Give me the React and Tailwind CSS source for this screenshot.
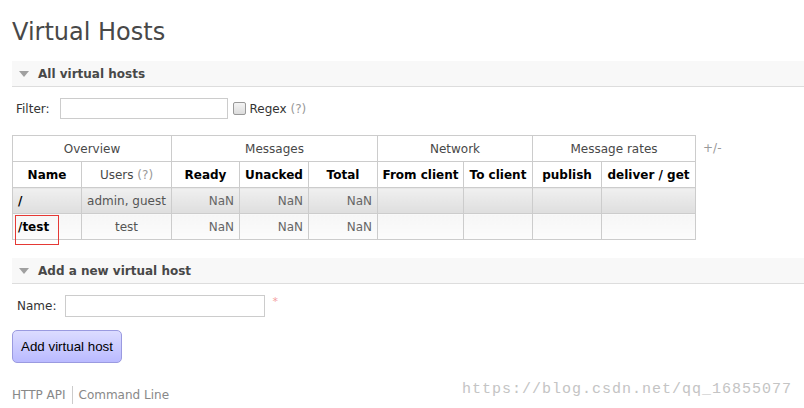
import React from "react";

const widths = [69, 90, 68, 69, 69, 86, 69, 69, 94];

function Bar({ children }) {
  return (
    <div className="flex h-[26px] items-center border-b border-[#dddddd] bg-[#f8f8f8]">
      <span className="ml-[7px] h-0 w-0 border-x-[5px] border-t-[6px] border-x-transparent border-t-[#a0a0a0]" />
      <span className="ml-[9px] text-[12px] font-bold leading-[14px] text-[#484848]">{children}</span>
    </div>
  );
}

export default function App() {
  const th = "border border-[#cccccc] h-[26px] p-0 align-middle leading-[14px]";
  const alt1 = "bg-linear-to-b from-[#f0f0f0] to-[#dedede]";
  const alt2 = "bg-linear-to-b from-[#f6f6f6] to-[#fcfcfc]";
  const rows = [
    { name: "/", users: "admin, guest", bg: alt1 },
    { name: "/test", users: "test", bg: alt2 },
  ];
  return (
    <div className="relative h-[408px] w-[804px] overflow-hidden bg-white font-['DejaVu_Sans',sans-serif] text-[12px] text-[#484848]">
      <div className="pl-[12px]">
        <h1 className="pt-[18px] text-[24px] font-normal leading-[28px] text-[#484848]">Virtual Hosts</h1>

        <div className="mt-[15px]">
          <Bar>All virtual hosts</Bar>
        </div>

        <div className="mt-[11px] flex h-[21px] items-center pl-[4px]">
          <span className="leading-[14px] text-[#333]">Filter:</span>
          <span className="ml-[10px] h-[21px] w-[168px] border border-[#cccccc] bg-white" />
          <span className="ml-[5px] h-[13px] w-[13px] rounded-[2px] border border-[#999] bg-linear-to-b from-[#f4f4f4] to-[#dcdcdc]" />
          <span className="ml-[4px] leading-[14px] text-[#333]">
            Regex <span className="text-[#999]">(?)</span>
          </span>
        </div>

        <div className="mt-[16px] flex items-start">
          <table className="w-[684px] table-fixed border-collapse text-[12px]">
            <colgroup>
              {widths.map((w, i) => (
                <col key={i} style={{ width: w }} />
              ))}
            </colgroup>
            <thead>
              <tr>
                <th colSpan={2} className={`${th} font-normal text-[#484848]`}>Overview</th>
                <th colSpan={3} className={`${th} font-normal text-[#484848]`}>Messages</th>
                <th colSpan={2} className={`${th} font-normal text-[#484848]`}>Network</th>
                <th colSpan={2} className={`${th} font-normal text-[#484848]`}>Message rates</th>
              </tr>
              <tr>
                <th className={`${th} font-bold text-black`}>Name</th>
                <th className={`${th} font-normal text-[#484848]`}>
                  Users <span className="text-[#999]">(?)</span>
                </th>
                <th className={`${th} font-bold text-black`}>Ready</th>
                <th className={`${th} font-bold text-black`}>Unacked</th>
                <th className={`${th} font-bold text-black`}>Total</th>
                <th className={`${th} font-bold text-black`}>From client</th>
                <th className={`${th} font-bold text-black`}>To client</th>
                <th className={`${th} font-bold text-black`}>publish</th>
                <th className={`${th} font-bold text-black`}>deliver / get</th>
              </tr>
            </thead>
            <tbody>
              {rows.map((r) => (
                <tr key={r.name}>
                  <td className={`${th} ${r.bg} pl-[5px] text-left font-bold text-black`}>{r.name}</td>
                  <td className={`${th} ${r.bg} text-center text-[#555]`}>{r.users}</td>
                  <td className={`${th} ${r.bg} pr-[5px] text-right text-[#666]`}>NaN</td>
                  <td className={`${th} ${r.bg} pr-[5px] text-right text-[#666]`}>NaN</td>
                  <td className={`${th} ${r.bg} pr-[5px] text-right text-[#666]`}>NaN</td>
                  <td className={`${th} ${r.bg}`}></td>
                  <td className={`${th} ${r.bg}`}></td>
                  <td className={`${th} ${r.bg}`}></td>
                  <td className={`${th} ${r.bg}`}></td>
                </tr>
              ))}
            </tbody>
          </table>
          <span className="ml-[7px] flex h-[26px] items-center leading-[14px] text-[#999]">+/-</span>
        </div>

        <div className="mt-[18px]">
          <Bar>Add a new virtual host</Bar>
        </div>

        <div className="mt-[11px] flex h-[22px] items-center pl-[5px]">
          <span className="leading-[14px] text-[#333]">Name:</span>
          <span className="ml-[9px] h-[22px] w-[200px] border border-[#cccccc] bg-white" />
          <span className="ml-[7px] -mt-[8px] text-[11px] leading-[12px] text-[#f4a0a0]">*</span>
        </div>

        <button className="mt-[13px] flex h-[33px] w-[110px] items-center justify-center rounded-[5px] border border-[#9a9ae0] bg-linear-to-b from-[#dcdcff] to-[#babaff] font-['Liberation_Sans',sans-serif] text-[13.33px] leading-[16px] text-black">
          Add virtual host
        </button>

        <div className="mt-[23px] flex h-[18px] items-center leading-[14px] text-[#888]">
          <span className="pr-[6px]">HTTP API</span>
          <span className="flex h-[18px] items-center border-l border-[#cccccc] pl-[6px]">Command Line</span>
        </div>
      </div>

      <div className="absolute left-[15px] top-[215px] h-[30px] w-[44px] border border-[#e53935]" />

      <div className="absolute left-[462px] top-[381px] font-['Liberation_Mono',monospace] text-[15px] leading-[18px] tracking-[1px] text-[#c4c4c4]">
        https://blog.csdn.net/qq_16855077
      </div>
    </div>
  );
}
